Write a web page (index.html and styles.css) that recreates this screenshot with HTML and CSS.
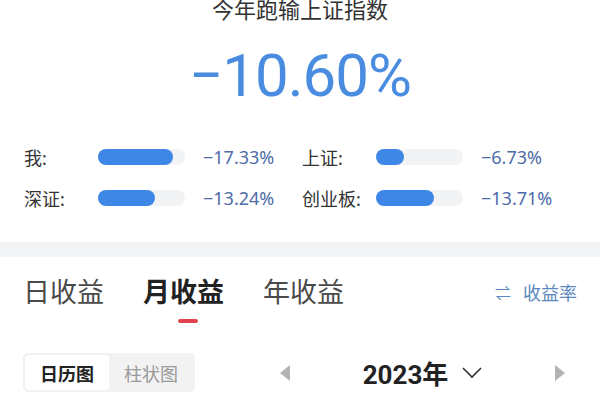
FILE: index.html
```html
<!DOCTYPE html>
<html lang="zh-CN">
<head>
<meta charset="utf-8">
<link rel="stylesheet" href="styles.css">
</head>
<body>
<div class="page">
  <div class="title">今年跑输上证指数</div>
  <div class="big">−10.60%</div>
  <div class="stats">
    <div class="stat">
      <span class="label">我:</span>
      <span class="track"><span class="fill" style="width:86%"></span></span>
      <span class="value">−17.33%</span>
    </div>
    <div class="stat">
      <span class="label">上证:</span>
      <span class="track"><span class="fill" style="width:32%"></span></span>
      <span class="value">−6.73%</span>
    </div>
    <div class="stat">
      <span class="label">深证:</span>
      <span class="track"><span class="fill" style="width:65%"></span></span>
      <span class="value">−13.24%</span>
    </div>
    <div class="stat">
      <span class="label">创业板:</span>
      <span class="track"><span class="fill" style="width:67%"></span></span>
      <span class="value">−13.71%</span>
    </div>
  </div>
  <div class="band"></div>
  <div class="tabs">
    <div class="tab">日收益</div>
    <div class="tab active">月收益<span class="underline"></span></div>
    <div class="tab">年收益</div>
    <div class="switch"><span class="swap">⇌</span>收益率</div>
  </div>
  <div class="toolbar">
    <div class="segment">
      <div class="seg on">日历图</div>
      <div class="seg">柱状图</div>
    </div>
    <div class="nav">
      <svg class="tri" width="10" height="16" viewBox="0 0 10 16"><path d="M10 0 L0 8 L10 16 Z" fill="#b3b3b3"/></svg>
      <div class="year">2023年
        <svg class="chev" width="20" height="12" viewBox="0 0 20 12"><path d="M1 1 L10 10 L19 1" fill="none" stroke="#333" stroke-width="1.6"/></svg>
      </div>
      <svg class="tri" width="10" height="16" viewBox="0 0 10 16"><path d="M0 0 L10 8 L0 16 Z" fill="#b3b3b3"/></svg>
    </div>
  </div>
</div>
</body>
</html>
```
FILE: styles.css
```css
html, body {
  margin: 0;
  padding: 0;
  background: #fff;
}
.page {
  width: 600px;
  height: 400px;
  overflow: hidden;
  font-family: "Noto Sans", "Noto Sans CJK SC", sans-serif;
  color: #333;
}
.title {
  text-align: center;
  font-size: 22px;
  line-height: 18px;
  height: 18px;
  color: #333;
}
.big {
  margin-top: 28px;
  height: 60px;
  line-height: 60px;
  text-align: center;
  font-family: Roboto, "Noto Sans", sans-serif;
  font-size: 60px;
  letter-spacing: -1px;
  color: #4a8de0;
}
.stats {
  margin-top: 30px;
  padding-left: 24px;
  display: grid;
  grid-template-columns: 278px 277px;
  grid-auto-rows: 41px;
}
.stat {
  display: flex;
  align-items: center;
}
.label {
  width: 74px;
  font-size: 18px;
  color: #333;
}
.track {
  width: 87px;
  height: 16px;
  border-radius: 8px;
  background: #f2f3f5;
  display: flex;
}
.fill {
  height: 16px;
  border-radius: 8px;
  background: #3e87e6;
}
.value {
  margin-left: 18px;
  font-size: 18px;
  color: #4e6ca8;
}
.band {
  margin-top: 24px;
  height: 15px;
  background: #f3f4f6;
}
.tabs {
  display: flex;
  align-items: flex-start;
  padding: 17px 23px 0 23px;
  height: 49px;
}
.tab {
  display: flex;
  flex-direction: column;
  align-items: center;
  font-size: 27px;
  line-height: 36px;
  color: #4a4a4a;
  margin-right: 39px;
}
.tab.active {
  font-weight: 700;
  color: #222;
}
.underline {
  width: 20px;
  height: 4px;
  border-radius: 2px;
  background: #e0424f;
  margin-top: 9px;
  margin-left: 8px;
}
.switch {
  margin-left: auto;
  font-size: 18px;
  line-height: 38px;
  color: #5b87c0;
  display: flex;
  align-items: center;
}
.swap {
  font-size: 16px;
  margin-right: 12px;
}
.toolbar {
  display: flex;
  align-items: center;
  margin-top: 30px;
  padding-left: 23px;
}
.segment {
  display: flex;
  width: 168px;
  height: 35px;
  padding: 2px;
  background: #f2f2f2;
  border-radius: 5px;
}
.seg {
  width: 84px;
  display: flex;
  align-items: center;
  justify-content: center;
  font-size: 18px;
  color: #9a9a9a;
}
.seg.on {
  background: #fff;
  border-radius: 4px;
  font-weight: 700;
  color: #222;
}
.nav {
  flex: 1;
  display: flex;
  align-items: center;
  justify-content: space-between;
  margin-left: 85px;
  margin-right: 35px;
}
.year {
  display: flex;
  align-items: center;
  font-family: Roboto, "Noto Sans CJK SC", sans-serif;
  font-weight: 700;
  font-size: 26px;
  color: #222;
}
.chev {
  margin-left: 14px;
}
```
